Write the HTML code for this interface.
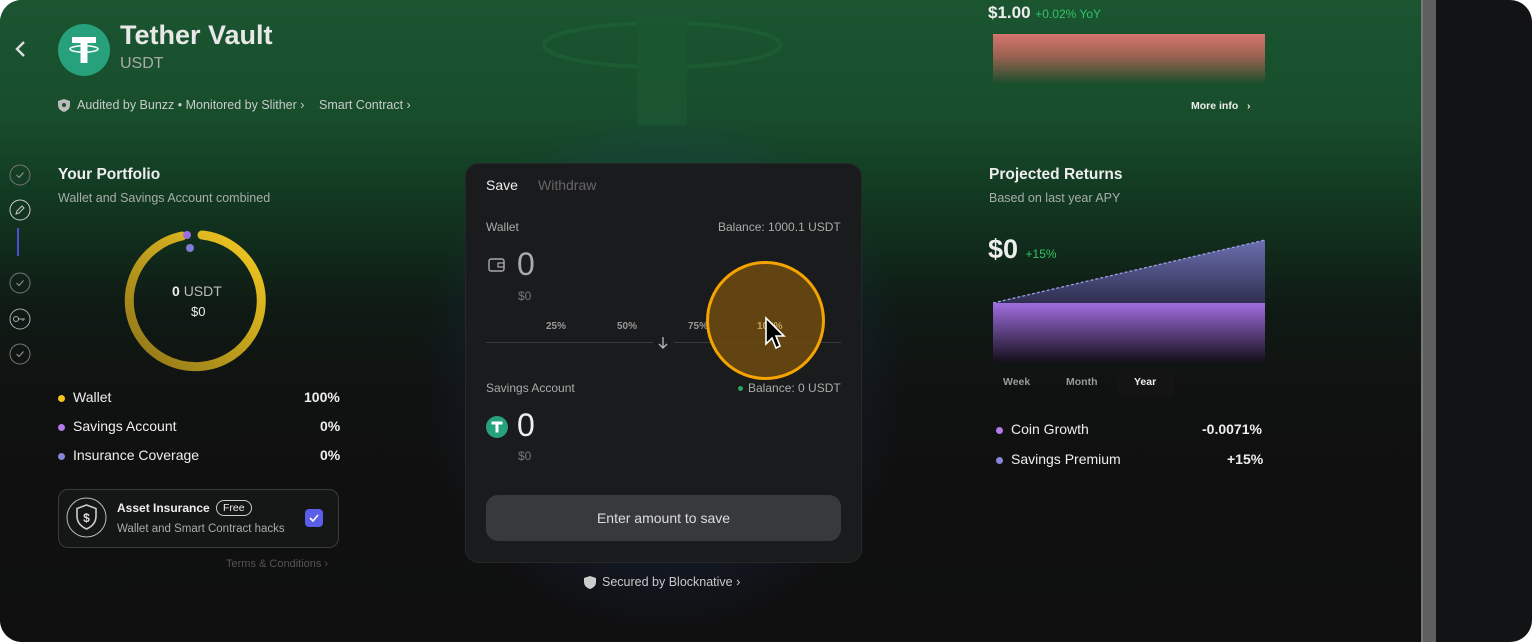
<!DOCTYPE html>
<html><head><meta charset="utf-8"><style>
*{margin:0;padding:0;box-sizing:border-box}
body{width:1532px;height:642px;background:#fff;font-family:"Liberation Sans",sans-serif;overflow:hidden;position:relative}
.frame{position:absolute;left:0;top:0;width:1532px;height:642px;border-radius:22px;overflow:hidden;background:#121314}
.main{position:absolute;left:0;top:0;width:1421px;height:642px;background:linear-gradient(180deg,#1a5530 0%,#184d2c 18%,#123a22 30%,#0f1a14 48%,#101111 62%,#0f0f0f 100%)}
.glow{position:absolute;left:420px;top:100px;width:490px;height:540px;background:radial-gradient(ellipse at center,rgba(60,90,180,.38) 0%,rgba(40,70,150,.18) 45%,rgba(0,0,0,0) 70%)}
.bar{position:absolute;left:1421px;top:0;width:15px;height:642px;background:#5f5f5f;border-left:2px solid #777}
.abs{position:absolute;white-space:nowrap}
.w{color:#eee}.g{color:#a8acaa}
.card{position:absolute;left:465px;top:163px;width:397px;height:400px;background:#1a1b1d;border-radius:14px;border:1px solid #262729}
.dot{display:inline-block;width:7px;height:7px;border-radius:50%;margin-right:8px;vertical-align:middle}
.side{position:absolute;left:9px}
</style></head><body>
<div class="frame">
<div class="main">
<div class="glow"></div>
<svg class="abs" style="left:540px;top:15px" width="245" height="110" opacity=".45"><ellipse cx="122" cy="30" rx="118" ry="22" fill="none" stroke="#226a3a" stroke-width="4"/><rect x="97" y="0" width="50" height="110" fill="#1d5e34"/></svg>

<svg class="abs" style="left:14px;top:40px" width="14" height="20"><path d="M10 2 L3 9 L10 16" stroke="#ddd" stroke-width="2.4" fill="none"/></svg>
<svg class="abs" style="left:58px;top:24px" width="52" height="52"><circle cx="26" cy="26" r="26" fill="#26a17b"/><rect x="14" y="13" width="24" height="6" fill="#fff"/><rect x="22.5" y="13" width="7" height="26" fill="#fff"/><ellipse cx="26" cy="25" rx="14" ry="3.2" fill="none" stroke="#fff" stroke-width="1.5"/></svg>
<div class="abs w" style="left:120px;top:20px;font-size:27px;font-weight:bold;color:#e8e8e8">Tether Vault</div>
<div class="abs g" style="left:120px;top:55px;font-size:16px">USDT</div>
<svg class="abs" style="left:58px;top:99px" width="12" height="13"><path d="M6 0 L12 2 V6 C12 10 9 12 6 13 C3 12 0 10 0 6 V2Z" fill="#bbb"/><circle cx="6" cy="6" r="2" fill="#1a4f2d"/></svg>
<div class="abs g" style="left:77px;top:98px;font-size:12.5px;color:#c8cbc9">Audited by Bunzz • Monitored by Slither ›</div>
<div class="abs g" style="left:319px;top:98px;font-size:12.5px;color:#c8cbc9">Smart Contract ›</div>

<svg class="side" style="top:164px" width="22" height="22"><circle cx="11" cy="11" r="10" fill="none" stroke="#777"/><path d="M7.5 11 L10 13.5 L14.5 8.5" stroke="#999" fill="none"/></svg>
<svg class="side" style="top:199px" width="22" height="22"><circle cx="11" cy="11" r="10" fill="none" stroke="#ccc"/><path d="M7 15 L8 12 L13 7 L15 9 L10 14Z" stroke="#ccc" fill="none"/></svg>
<div class="abs" style="left:17px;top:228px;width:2px;height:28px;background:#4b4fd8"></div>
<svg class="side" style="top:272px" width="22" height="22"><circle cx="11" cy="11" r="10" fill="none" stroke="#777"/><path d="M7.5 11 L10 13.5 L14.5 8.5" stroke="#999" fill="none"/></svg>
<svg class="side" style="top:308px" width="22" height="22"><circle cx="11" cy="11" r="10" fill="none" stroke="#aaa"/><circle cx="7" cy="11" r="2.5" fill="none" stroke="#aaa"/><path d="M9.5 11 H16 M14 11 V13" stroke="#aaa" fill="none"/></svg>
<svg class="side" style="top:343px" width="22" height="22"><circle cx="11" cy="11" r="10" fill="none" stroke="#777"/><path d="M7.5 11 L10 13.5 L14.5 8.5" stroke="#999" fill="none"/></svg>

<div class="abs w" style="left:58px;top:166px;font-size:15.5px;font-weight:bold">Your Portfolio</div>
<div class="abs g" style="left:58px;top:191px;font-size:12.5px">Wallet and Savings Account combined</div>
<svg class="abs" style="left:124px;top:227px" width="148" height="148"><defs><linearGradient id="yg" x1="1" y1="0" x2="0" y2="1"><stop offset="0" stop-color="#f5cc22"/><stop offset="1" stop-color="#8c7318"/></linearGradient></defs><path d="M78 8 A66 66 0 1 1 58 9" fill="none" stroke="url(#yg)" stroke-width="9" stroke-linecap="round"/><circle cx="63" cy="8" r="4" fill="#9a6de0"/><circle cx="66" cy="21" r="4" fill="#7f7cd8"/></svg>
<div class="abs w" style="left:172px;top:283px;font-size:14px"><b>0</b> <span style="color:#bbb">USDT</span></div>
<div class="abs w" style="left:191px;top:304px;font-size:13px">$0</div>
<div class="abs w" style="left:58px;top:389px;font-size:14px"><span class="dot" style="background:#f3c41f"></span>Wallet</div>
<div class="abs w" style="left:58px;top:418px;font-size:14px"><span class="dot" style="background:#b47ae8"></span>Savings Account</div>
<div class="abs w" style="left:58px;top:447px;font-size:14px"><span class="dot" style="background:#8886d8"></span>Insurance Coverage</div>
<div class="abs w" style="left:304px;top:389px;font-size:14px;font-weight:bold">100%</div>
<div class="abs w" style="left:320px;top:418px;font-size:14px;font-weight:bold">0%</div>
<div class="abs w" style="left:320px;top:447px;font-size:14px;font-weight:bold">0%</div>
<div class="abs" style="left:58px;top:489px;width:281px;height:59px;border:1px solid #3a3b3c;border-radius:10px;background:#151616"></div>
<svg class="abs" style="left:66px;top:497px" width="41" height="41"><circle cx="20.5" cy="20.5" r="19.5" fill="none" stroke="#bbb"/><path d="M20.5 8 L30 11.5 V19 C30 26 25 30 20.5 32 C16 30 11 26 11 19 V11.5Z" fill="none" stroke="#ccc" stroke-width="1.6"/><text x="20.5" y="25" font-size="12" text-anchor="middle" fill="#ddd" font-family="Liberation Sans" font-weight="bold">$</text></svg>
<div class="abs w" style="left:117px;top:501px;font-size:12px;font-weight:bold">Asset Insurance</div>
<div class="abs w" style="left:216px;top:500px;font-size:10.5px;border:1px solid #ccc;border-radius:9px;padding:1px 6px">Free</div>
<div class="abs g" style="left:117px;top:523px;font-size:11.5px">Wallet and Smart Contract hacks</div>
<div class="abs" style="left:305px;top:509px;width:18px;height:18px;border-radius:4px;background:#5b5ee8"></div>
<svg class="abs" style="left:305px;top:509px" width="18" height="18"><path d="M5 9 L8 12 L13 6" stroke="#fff" stroke-width="1.6" fill="none"/></svg>
<div class="abs" style="left:226px;top:558px;font-size:11px;color:#555">Terms &amp; Conditions ›</div>

<div class="card"></div>
<div class="abs w" style="left:486px;top:177px;font-size:14px">Save</div>
<div class="abs" style="left:538px;top:177px;font-size:14px;color:#666">Withdraw</div>
<div class="abs g" style="left:486px;top:220px;font-size:12px">Wallet</div>
<div class="abs g" style="left:718px;top:220px;font-size:12px">Balance: 1000.1 USDT</div>
<svg class="abs" style="left:488px;top:257px" width="18" height="16"><rect x="1" y="2" width="15" height="12" rx="2" fill="none" stroke="#aaa" stroke-width="1.4"/><rect x="10" y="6" width="6" height="4" fill="none" stroke="#aaa" stroke-width="1.2"/></svg>
<div class="abs" style="left:517px;top:246px;font-size:32px;color:#aaa">0</div>
<div class="abs" style="left:518px;top:289px;font-size:12px;color:#777">$0</div>
<div class="abs" style="left:546px;top:321px;font-size:10px;color:#999;font-weight:bold">25%</div>
<div class="abs" style="left:617px;top:321px;font-size:10px;color:#999;font-weight:bold">50%</div>
<div class="abs" style="left:688px;top:321px;font-size:10px;color:#999;font-weight:bold">75%</div>
<div class="abs" style="left:486px;top:342px;width:167px;height:1px;background:#3a3a3a"></div>
<div class="abs" style="left:674px;top:342px;width:167px;height:1px;background:#3a3a3a"></div>
<svg class="abs" style="left:657px;top:336px" width="12" height="14"><path d="M6 1 V12 M2 8 L6 12 L10 8" stroke="#bbb" stroke-width="1.3" fill="none"/></svg>
<div class="abs g" style="left:486px;top:381px;font-size:12px">Savings Account</div>
<div class="abs g" style="left:738px;top:381px;font-size:12px"><span style="display:inline-block;width:5px;height:5px;background:#2fa065;border-radius:50%;vertical-align:middle;margin-right:5px"></span>Balance: 0 USDT</div>
<svg class="abs" style="left:486px;top:416px" width="22" height="22"><circle cx="11" cy="11" r="11" fill="#26a17b"/><rect x="5.5" y="5.5" width="11" height="3" fill="#fff"/><rect x="9.5" y="5.5" width="3" height="11" fill="#fff"/></svg>
<div class="abs w" style="left:517px;top:407px;font-size:32px">0</div>
<div class="abs" style="left:518px;top:449px;font-size:12px;color:#777">$0</div>
<div class="abs" style="left:486px;top:495px;width:355px;height:46px;border-radius:12px;background:#38393b;color:#ddd;font-size:14px;text-align:center;line-height:46px">Enter amount to save</div>
<svg class="abs" style="left:584px;top:576px" width="12" height="13"><path d="M6 0 L12 2 V6 C12 10 9 12 6 13 C3 12 0 10 0 6 V2Z" fill="#ccc"/></svg>
<div class="abs" style="left:602px;top:575px;font-size:12.5px;color:#c8c8c8">Secured by Blocknative ›</div>

<div class="abs" style="left:706px;top:261px;width:119px;height:119px;border-radius:50%;border:3px solid #f4a300;background:rgba(110,75,15,.85)"></div>
<div class="abs" style="left:757px;top:321px;font-size:10px;color:#c9a25a;font-weight:bold">100%</div>
<svg class="abs" style="left:764px;top:316px" width="24" height="38"><path d="M2 2 V28 L8 22 L12 32 L16 30 L12 20 L20 20Z" fill="#000" stroke="#fff" stroke-width="1.6"/></svg>

<div class="abs w" style="left:988px;top:3px;font-size:17px;font-weight:bold">$1.00 <span style="font-size:12px;color:#32c468;font-weight:normal">+0.02% YoY</span></div>
<div class="abs" style="left:993px;top:34px;width:272px;height:50px;background:linear-gradient(180deg,#d6746d 0%,#9a6250 45%,#1a4d2b 100%)"></div>
<div class="abs w" style="left:1191px;top:100px;font-size:10.5px;font-weight:bold">More info &nbsp;&nbsp;›</div>
<div class="abs w" style="left:989px;top:166px;font-size:15.5px;font-weight:bold">Projected Returns</div>
<div class="abs g" style="left:989px;top:191px;font-size:12.5px">Based on last year APY</div>
<div class="abs w" style="left:988px;top:234px;font-size:27px;font-weight:bold">$0 <span style="font-size:12px;color:#32c468;font-weight:normal">+15%</span></div>
<svg class="abs" style="left:993px;top:238px" width="272" height="125"><defs><linearGradient id="pb" x1="0" y1="0" x2="0" y2="1"><stop offset="0" stop-color="#6c6eb0"/><stop offset="1" stop-color="#2f3050"/></linearGradient><linearGradient id="pp" x1="0" y1="0" x2="0" y2="1"><stop offset="0" stop-color="#a06de0"/><stop offset="1" stop-color="#120f18"/></linearGradient></defs><path d="M0 65 L272 2 V65Z" fill="url(#pb)"/><path d="M0 65 L272 2" stroke="#9d9de8" stroke-dasharray="3 2" stroke-width="1.3"/><rect x="0" y="65" width="272" height="60" fill="url(#pp)"/></svg>
<div class="abs" style="left:1003px;top:376px;font-size:10.5px;color:#999;font-weight:bold">Week</div>
<div class="abs" style="left:1066px;top:376px;font-size:10.5px;color:#999;font-weight:bold">Month</div>
<div class="abs" style="left:1117px;top:368px;width:57px;height:29px;border-radius:7px;background:#141414"></div>
<div class="abs w" style="left:1134px;top:376px;font-size:10.5px;font-weight:bold">Year</div>
<div class="abs w" style="left:996px;top:421px;font-size:14px"><span class="dot" style="background:#b47ae8"></span>Coin Growth</div>
<div class="abs w" style="left:996px;top:451px;font-size:14px"><span class="dot" style="background:#8886d8"></span>Savings Premium</div>
<div class="abs w" style="left:1202px;top:421px;font-size:14px;font-weight:bold">-0.0071%</div>
<div class="abs w" style="left:1227px;top:451px;font-size:14px;font-weight:bold">+15%</div>
</div>
<div class="bar"></div>
</div>
</body></html>
